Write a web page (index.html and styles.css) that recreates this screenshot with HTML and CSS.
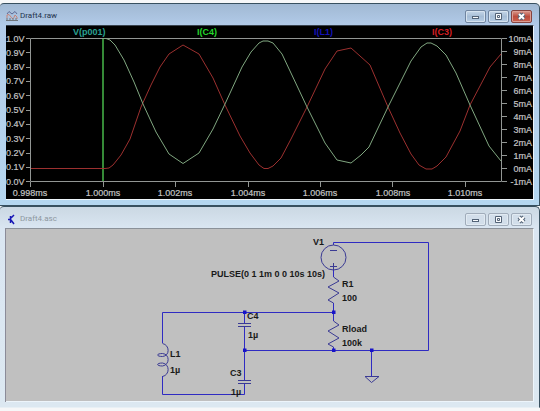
FILE: index.html
```html
<!DOCTYPE html>
<html lang="en">
<head>
<meta charset="utf-8">
<title>Draft4</title>
<link rel="stylesheet" href="styles.css">
</head>
<body>
<main class="desk">
<section class="window active">
  <header class="titlebar">
    <svg class="icon" viewBox="0 0 12 12" aria-hidden="true"><path d="M1 4L3 1.500L6 4L9 1.500L11 4" fill="none" stroke="#5f6a94"/><path d="M1 8V5Q3 3 5 7T9 5L11 7V9" fill="none" stroke="#c78378"/><path d="M0 10.500H12M1 8V11M4 8V11M7 8V11M10 8V11" stroke="#6e747b" fill="none"/></svg>
    <h1 class="title">Draft4.raw</h1>
    <div class="controls">
      <button class="ctl" aria-label="Minimize"><svg viewBox="0 0 19 11"><rect x="6.500" y="5.500" width="6" height="2"/></svg></button>
      <button class="ctl" aria-label="Maximize"><svg viewBox="0 0 19 11"><path d="M6.500 2.500H12.500V8.500H6.500ZM8.500 4.500H10.500V6.500H8.500Z"/></svg></button>
      <button class="ctl close" aria-label="Close"><svg viewBox="0 0 19 11"><path class="cross-edge" d="M7 3L12 8M12 3L7 8"/><path class="cross" d="M7 3L12 8M12 3L7 8"/></svg></button>
    </div>
  </header>
  <svg class="view plot" viewBox="6 26 527 173" role="img" aria-label="Waveforms">
    <path class="axis" d="M30.500 38.500H501.500V181.500H30.500ZM26 38.500H30M26 52.500H30M26 67.500H30M26 81.500H30M26 95.500H30M26 110.500H30M26 124.500H30M26 138.500H30M26 153.500H30M26 167.500H30M26 181.500H30M502 38.500H507M502 51.500H507M502 64.500H507M502 77.500H507M502 90.500H507M502 103.500H507M502 116.500H507M502 129.500H507M502 142.500H507M502 155.500H507M502 168.500H507M502 181.500H507M30.500 182V187M103.500 182V187M175.500 182V187M248.500 182V187M320.500 182V187M392.500 182V187M465.500 182V187"/>
    <path class="step" d="M103 39V181"/>
    <path class="trace red" d="M31 168.500H105L109 168L113 165L121 155L130 139L141 107L151 85L160 67L169 54L183 45L199 54L213 78L225 105L240 136L250 153L259 165L264 168.500H268L273 166L281 158L291 139L307 107L325 69L337 51L351 48L360 56L370 65L388 107L400 133L411 154L419 165L426 169H432L437 166L446 157L460 131L470 105L490 67L501 54"/>
    <path class="trace green" d="M103 38.500H106L110 40L115 45L124 60L134 82L143 104L156 132L169 154L183 163.500L199 153L213 129L225 104L242 67L251 52L259 43L263 41H268L273 43L282 54L307 107L325 143L337 160L351 163L361 155L369 147L388 107L411 61L421 47L427 43H431L437 46L446 55L456 73L470 105L489 146L501 161"/>
    <g class="legend"><text x="73" y="35" class="teal">V(p001)</text><text x="197" y="35" class="lime">I(C4)</text><text x="314" y="35" class="blue">I(L1)</text><text x="432" y="35" class="crimson">I(C3)</text></g>
    <g class="tick"><text x="6" y="42">1.0V</text><text x="6" y="56">0.9V</text><text x="6" y="70">0.8V</text><text x="6" y="84">0.7V</text><text x="6" y="99">0.6V</text><text x="6" y="113">0.5V</text><text x="6" y="127">0.4V</text><text x="6" y="142">0.3V</text><text x="6" y="156">0.2V</text><text x="6" y="170">0.1V</text><text x="6" y="185">0.0V</text></g>
    <g class="tick end"><text x="532" y="42">10mA</text><text x="532" y="55">9mA</text><text x="532" y="68">8mA</text><text x="532" y="81">7mA</text><text x="532" y="94">6mA</text><text x="532" y="107">5mA</text><text x="532" y="120">4mA</text><text x="532" y="133">3mA</text><text x="532" y="146">2mA</text><text x="532" y="159">1mA</text><text x="532" y="172">0mA</text><text x="532" y="185">-1mA</text></g>
    <g class="tick mid"><text x="30" y="196">0.998ms</text><text x="103" y="196">1.000ms</text><text x="175" y="196">1.002ms</text><text x="248" y="196">1.004ms</text><text x="320" y="196">1.006ms</text><text x="393" y="196">1.008ms</text><text x="465" y="196">1.010ms</text></g>
  </svg>
</section>
<section class="window idle">
  <header class="titlebar">
    <svg class="icon" viewBox="0 0 12 12" aria-hidden="true"><path d="M4.500 3V10M2 6.500H4M5 5L8 2M5 7L8 11" fill="none" stroke="#1717b5" stroke-width="1.500"/></svg>
    <h1 class="title">Draft4.asc</h1>
    <div class="controls">
      <button class="ctl" aria-label="Minimize"><svg viewBox="0 0 19 11"><rect x="6.500" y="5.500" width="6" height="2"/></svg></button>
      <button class="ctl" aria-label="Maximize"><svg viewBox="0 0 19 11"><path d="M6.500 2.500H12.500V8.500H6.500ZM8.500 4.500H10.500V6.500H8.500Z"/></svg></button>
      <button class="ctl" aria-label="Close"><svg viewBox="0 0 19 11"><path class="cross-edge" d="M7 3L12 8M12 3L7 8"/><path class="cross" d="M7 3L12 8M12 3L7 8"/></svg></button>
    </div>
  </header>
  <svg class="view sheet" viewBox="6 229 527 172" role="img" aria-label="Schematic">
    <path class="wire" d="M333.500 245V242.500H428.500V350.500H244.500M333.500 303V321M333.500 312.500H162.500V343M162.500 376V394.500H244.500V384M244.500 312V323M244.500 327V380M371.500 350V376M333.500 347V350M333.500 265V277"/>
    <g class="part">
      <circle cx="333.500" cy="257.500" r="12.500"/>
      <path d="M330 250.500H337M330 266.500H337M333.500 263V270"/>
      <path d="M333.500 277L339 281L328 287L339 293L328 300L333.500 303"/>
      <path d="M333.500 321L339 325L328 331L339 338L328 344L333.500 347"/>
      <path d="M238 323.500H251M238 326.500H251M238 380.500H251M238 383.500H251"/>
      <path d="M365 376.500H379L371.500 382.500Z"/>
      <path d="M162.500 343.500C170 345 170 356 162.500 356.500C156 356.500 156 353.500 162.500 353.500C170 354 170 365 162.500 366C156 366 156 363 162.500 363C170 364 170 375 162.500 376.500"/>
    </g>
    <path class="node" d="M243 310.500H246.500V314H243ZM332 310.500H335.500V314H332ZM243 348.500H246.500V352H243ZM332 348.500H335.500V352H332ZM370 348.500H373.500V352H370Z"/>
    <g class="label"><text x="313" y="245">V1</text><text x="325" y="277" class="end">PULSE(0 1 1m 0 0 10s 10s)</text><text x="342" y="287">R1</text><text x="342" y="301">100</text><text x="342" y="332">Rload</text><text x="342" y="346">100k</text><text x="247" y="319">C4</text><text x="248" y="338">1µ</text><text x="170" y="357">L1</text><text x="170" y="373">1µ</text><text x="230" y="376">C3</text><text x="231" y="395">1µ</text></g>
  </svg>
</section>
</main>
</body>
</html>
```
FILE: styles.css
```css
* { box-sizing: border-box; }
body { margin: 0; background: #f6f7f8; font-family: "Liberation Sans", Arial, sans-serif; }
.desk { padding-top: 3px; }
.window {
  padding: 0 5px 5px 6px;
  border: solid #38505f;
  border-width: 1px 1px 1px 0;
  border-radius: 4px 5px 0 0;
}
.active { background: linear-gradient(#a1b9d3, #b2cbe9 22px, #b5d7f0); }
.idle { border-bottom-color: #e8f0f5; background: linear-gradient(#cbd8e3, #dae6f2 22px, #dce8f1); }
.titlebar { display: flex; align-items: center; height: 21px; gap: 2px; padding: 3px 2px 0 0; }
.icon { width: 12px; height: 12px; }
.title { flex: 1; margin: 0; font: 400 8px/10px Roboto, sans-serif; color: #23334d; }
.idle .title { color: #8d979f; }
.controls { display: flex; gap: 2px; }
.ctl {
  display: block;
  width: 21px;
  height: 13px;
  padding: 0;
  border: 1px solid #7085a0;
  border-radius: 2px;
  background: linear-gradient(#c6d7e8, #a6bdd6 50%, #b7cee5);
  box-shadow: inset 0 0 0 1px #d6e3ef;
}
.ctl svg { display: block; width: 19px; height: 11px; fill: #f8fafc; stroke: #536377; }
.idle .ctl { border-color: #a0acba; background: #d2deea; box-shadow: inset 0 0 0 1px #e1eaf2; }
.ctl.close { border-color: #85433f; background: linear-gradient(#d89b8f, #bd4c3d 50%, #cb604e); box-shadow: inset 0 0 0 1px #dc9d93; }
.ctl .cross-edge { stroke-width: 4; }
.ctl .cross { stroke: #fff; stroke-width: 2; }
.view { display: block; width: 100%; height: auto; border: solid #edf5fb; border-width: 0 1px 1px 0; }
.plot { background: #000; border-top: 1px solid #39434e; }
.sheet { background: #c0c0c0; border-top: 1px solid #8b9199; box-shadow: -1px 0 #8b8b98; }
.axis { fill: none; stroke: #929694; }
.step { stroke: #358a37; stroke-width: 2; }
.trace { fill: none; stroke-width: 1; }
.red { stroke: #9c302f; }
.green { stroke: #80a780; }
text { font-size: 9px; }
.tick { fill: #c4c4c4; stroke: #c4c4c4; stroke-width: 0.200; }
.end { text-anchor: end; }
.mid { text-anchor: middle; }
.legend { font-weight: 700; }
.teal { fill: #2ba092; }
.lime { fill: #24d52b; }
.blue { fill: #1212b8; }
.crimson { fill: #d51f23; }
.wire { fill: none; stroke: #2f2bc2; }
.part { fill: none; stroke: #3a3a94; }
.node { fill: #1713c8; }
.label { font-weight: 700; fill: #191919; }
```
